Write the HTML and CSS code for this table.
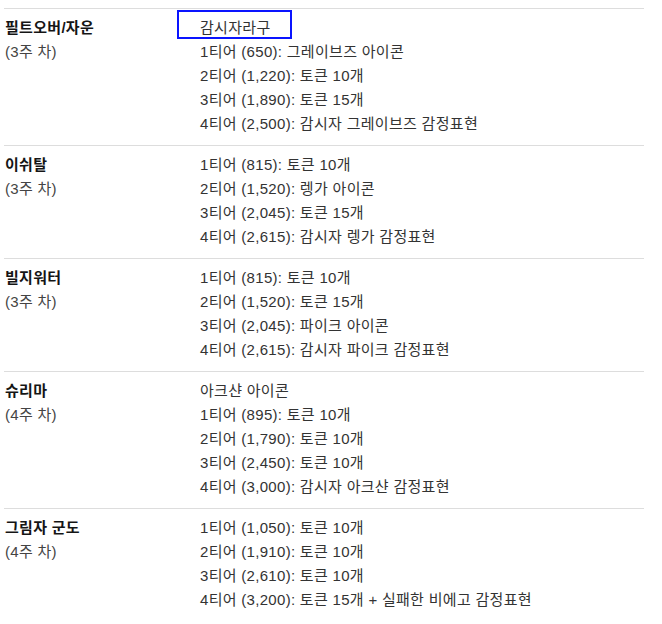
FILE: index.html
```html
<!DOCTYPE html>
<html lang="ko">
<head>
<meta charset="utf-8">
<link rel="stylesheet" href="styles.css">
</head>
<body>
<div class="table">
  <div class="row">
    <div class="who"><div class="name">필트오버/자운</div><div class="week">(3주 차)</div></div>
    <div class="rewards">
      <div class="item first">감시자라구<span class="focus"></span></div>
      <div class="item">1티어 (650): 그레이브즈 아이콘</div>
      <div class="item">2티어 (1,220): 토큰 10개</div>
      <div class="item">3티어 (1,890): 토큰 15개</div>
      <div class="item">4티어 (2,500): 감시자 그레이브즈 감정표현</div>
    </div>
  </div>
  <div class="row">
    <div class="who"><div class="name">이쉬탈</div><div class="week">(3주 차)</div></div>
    <div class="rewards">
      <div class="item">1티어 (815): 토큰 10개</div>
      <div class="item">2티어 (1,520): 렝가 아이콘</div>
      <div class="item">3티어 (2,045): 토큰 15개</div>
      <div class="item">4티어 (2,615): 감시자 렝가 감정표현</div>
    </div>
  </div>
  <div class="row">
    <div class="who"><div class="name">빌지워터</div><div class="week">(3주 차)</div></div>
    <div class="rewards">
      <div class="item">1티어 (815): 토큰 10개</div>
      <div class="item">2티어 (1,520): 토큰 15개</div>
      <div class="item">3티어 (2,045): 파이크 아이콘</div>
      <div class="item">4티어 (2,615): 감시자 파이크 감정표현</div>
    </div>
  </div>
  <div class="row">
    <div class="who"><div class="name">슈리마</div><div class="week">(4주 차)</div></div>
    <div class="rewards">
      <div class="item">아크샨 아이콘</div>
      <div class="item">1티어 (895): 토큰 10개</div>
      <div class="item">2티어 (1,790): 토큰 10개</div>
      <div class="item">3티어 (2,450): 토큰 10개</div>
      <div class="item">4티어 (3,000): 감시자 아크샨 감정표현</div>
    </div>
  </div>
  <div class="row">
    <div class="who"><div class="name">그림자 군도</div><div class="week">(4주 차)</div></div>
    <div class="rewards">
      <div class="item">1티어 (1,050): 토큰 10개</div>
      <div class="item">2티어 (1,910): 토큰 10개</div>
      <div class="item">3티어 (2,610): 토큰 10개</div>
      <div class="item">4티어 (3,200): 토큰 15개 + 실패한 비에고 감정표현</div>
    </div>
  </div>
</div>
</body>
</html>
```
FILE: styles.css
```css
html, body {
  margin: 0;
  padding: 0;
  background: #ffffff;
}
body {
  font-family: "Liberation Sans", "Noto Sans CJK KR", sans-serif;
  font-size: 15px;
  letter-spacing: 0.3px;
  color: #333333;
}
.table {
  margin: 8px 0 0 4px;
  width: 640px;
}
.row {
  display: grid;
  grid-template-columns: 196px 1fr;
  border-top: 1px solid #dddddd;
  padding: 7px 0 9px;
}
.who {
  padding-left: 1px;
}
.name {
  font-weight: bold;
  color: #151515;
  line-height: 24px;
}
.week {
  color: #444444;
  line-height: 24px;
}
.rewards {
  display: flex;
  flex-direction: column;
}
.item {
  line-height: 24px;
  white-space: nowrap;
}
.first {
  position: relative;
}
.focus {
  position: absolute;
  left: -23px;
  top: -6px;
  width: 111px;
  height: 25px;
  border: 2px solid #0a14ff;
}
```
